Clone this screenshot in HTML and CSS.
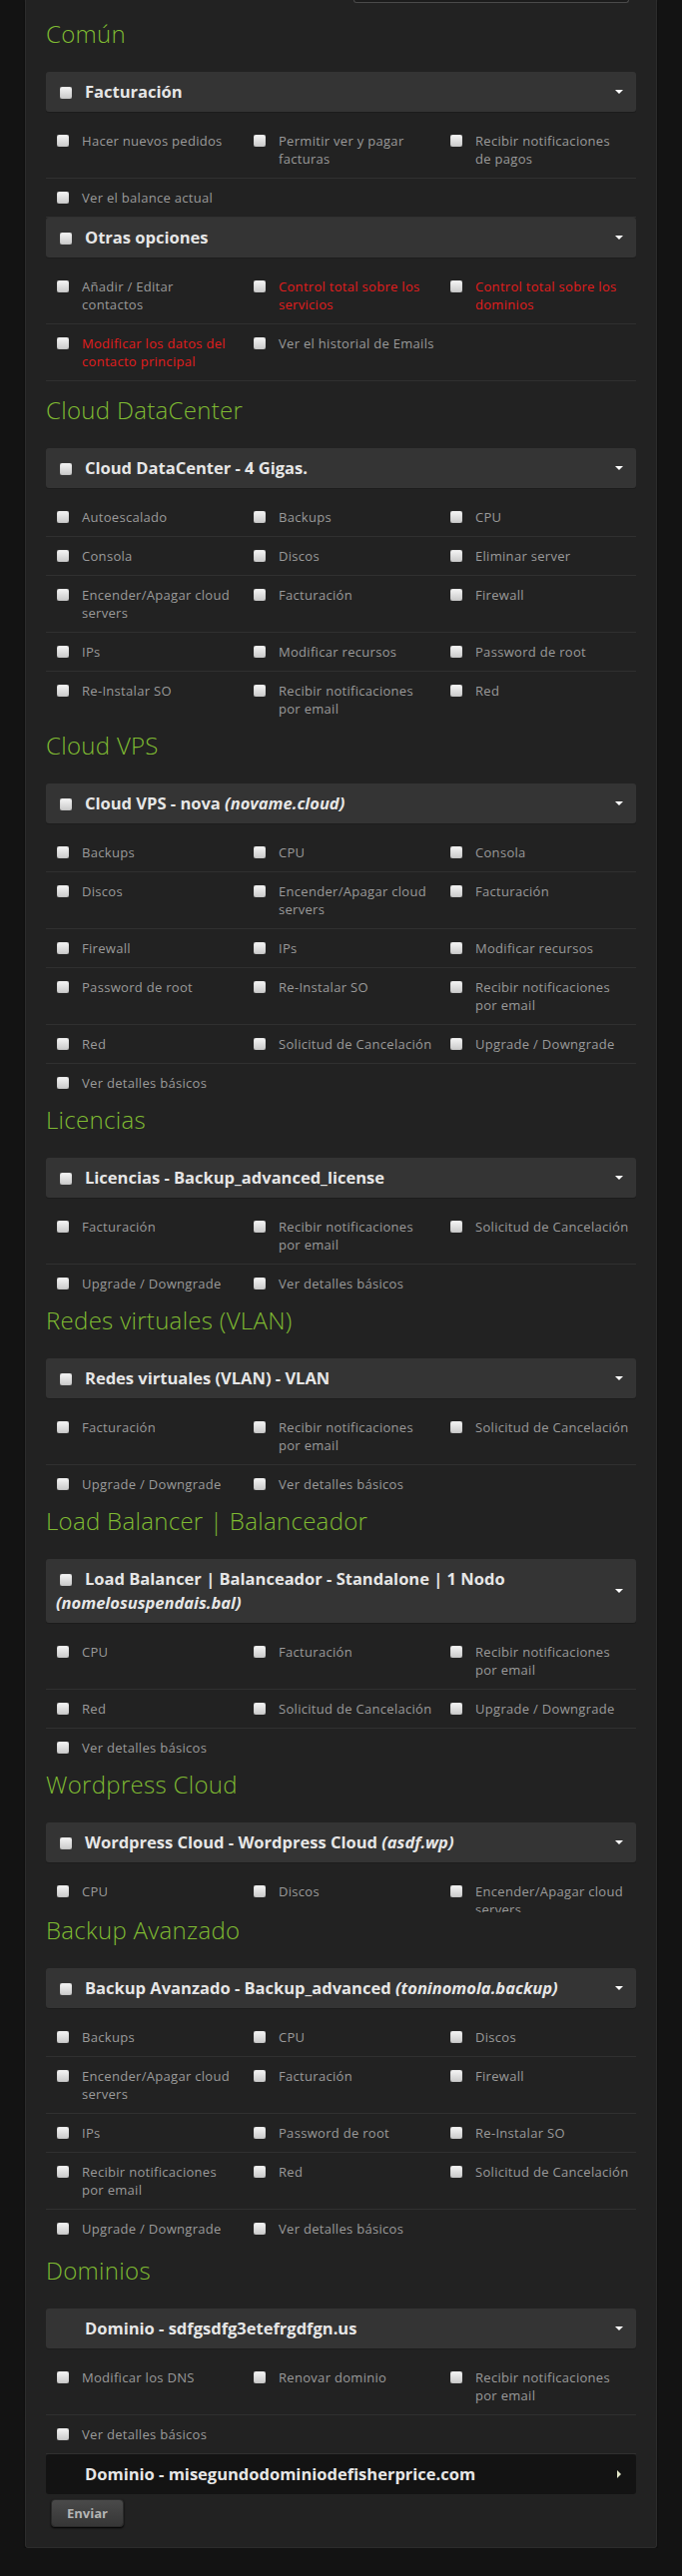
FILE: index.html
```html
<!DOCTYPE html>
<html lang="es">
<head>
    <meta charset="UTF-8">
    <meta name="viewport" content="width=device-width, initial-scale=1.0">
    <title>Permisos del contacto</title>
    <link rel="stylesheet" href="styles.css">
</head>
<body>
    <form class="panel">
        <div class="topbar"><div class="top-select"></div></div>

        <!-- Común -->
        <div class="section section-common">
            <h2 class="section-title">Común</h2>
            <div class="group">
                <div class="group-head"><span class="head-text"><input type="checkbox">Facturación</span><span class="caret"></span></div>
                <div class="options">
                    <div class="row">
                        <label class="opt"><input type="checkbox"><span>Hacer nuevos pedidos</span></label>
                        <label class="opt"><input type="checkbox"><span>Permitir ver y pagar<br>facturas</span></label>
                        <label class="opt"><input type="checkbox"><span>Recibir notificaciones<br>de pagos</span></label>
                    </div>
                    <div class="row">
                        <label class="opt"><input type="checkbox"><span>Ver el balance actual</span></label>
                    </div>
                </div>
            </div>
            <div class="group">
                <div class="group-head"><span class="head-text"><input type="checkbox">Otras opciones</span><span class="caret"></span></div>
                <div class="options">
                    <div class="row">
                        <label class="opt"><input type="checkbox"><span>Añadir / Editar<br>contactos</span></label>
                        <label class="opt danger"><input type="checkbox"><span>Control total sobre los<br>servicios</span></label>
                        <label class="opt danger"><input type="checkbox"><span>Control total sobre los<br>dominios</span></label>
                    </div>
                    <div class="row">
                        <label class="opt danger"><input type="checkbox"><span>Modificar los datos del<br>contacto principal</span></label>
                        <label class="opt"><input type="checkbox"><span>Ver el historial de Emails</span></label>
                    </div>
                </div>
            </div>
        </div>

        <!-- Cloud DataCenter -->
        <div class="section">
            <h2 class="section-title">Cloud DataCenter</h2>
            <div class="group">
                <div class="group-head"><span class="head-text"><input type="checkbox">Cloud DataCenter - 4 Gigas.</span><span class="caret"></span></div>
                <div class="options">
                    <div class="row">
                        <label class="opt"><input type="checkbox"><span>Autoescalado</span></label>
                        <label class="opt"><input type="checkbox"><span>Backups</span></label>
                        <label class="opt"><input type="checkbox"><span>CPU</span></label>
                    </div>
                    <div class="row">
                        <label class="opt"><input type="checkbox"><span>Consola</span></label>
                        <label class="opt"><input type="checkbox"><span>Discos</span></label>
                        <label class="opt"><input type="checkbox"><span>Eliminar server</span></label>
                    </div>
                    <div class="row">
                        <label class="opt"><input type="checkbox"><span>Encender/Apagar cloud<br>servers</span></label>
                        <label class="opt"><input type="checkbox"><span>Facturación</span></label>
                        <label class="opt"><input type="checkbox"><span>Firewall</span></label>
                    </div>
                    <div class="row">
                        <label class="opt"><input type="checkbox"><span>IPs</span></label>
                        <label class="opt"><input type="checkbox"><span>Modificar recursos</span></label>
                        <label class="opt"><input type="checkbox"><span>Password de root</span></label>
                    </div>
                    <div class="row">
                        <label class="opt"><input type="checkbox"><span>Re-Instalar SO</span></label>
                        <label class="opt"><input type="checkbox"><span>Recibir notificaciones<br>por email</span></label>
                        <label class="opt"><input type="checkbox"><span>Red</span></label>
                    </div>
                </div>
            </div>
        </div>

        <!-- Cloud VPS -->
        <div class="section">
            <h2 class="section-title">Cloud VPS</h2>
            <div class="group">
                <div class="group-head"><span class="head-text"><input type="checkbox">Cloud VPS - nova <em>(novame.cloud)</em></span><span class="caret"></span></div>
                <div class="options">
                    <div class="row">
                        <label class="opt"><input type="checkbox"><span>Backups</span></label>
                        <label class="opt"><input type="checkbox"><span>CPU</span></label>
                        <label class="opt"><input type="checkbox"><span>Consola</span></label>
                    </div>
                    <div class="row">
                        <label class="opt"><input type="checkbox"><span>Discos</span></label>
                        <label class="opt"><input type="checkbox"><span>Encender/Apagar cloud<br>servers</span></label>
                        <label class="opt"><input type="checkbox"><span>Facturación</span></label>
                    </div>
                    <div class="row">
                        <label class="opt"><input type="checkbox"><span>Firewall</span></label>
                        <label class="opt"><input type="checkbox"><span>IPs</span></label>
                        <label class="opt"><input type="checkbox"><span>Modificar recursos</span></label>
                    </div>
                    <div class="row">
                        <label class="opt"><input type="checkbox"><span>Password de root</span></label>
                        <label class="opt"><input type="checkbox"><span>Re-Instalar SO</span></label>
                        <label class="opt"><input type="checkbox"><span>Recibir notificaciones<br>por email</span></label>
                    </div>
                    <div class="row">
                        <label class="opt"><input type="checkbox"><span>Red</span></label>
                        <label class="opt"><input type="checkbox"><span>Solicitud de Cancelación</span></label>
                        <label class="opt"><input type="checkbox"><span>Upgrade / Downgrade</span></label>
                    </div>
                    <div class="row">
                        <label class="opt"><input type="checkbox"><span>Ver detalles básicos</span></label>
                    </div>
                </div>
            </div>
        </div>

        <!-- Licencias -->
        <div class="section">
            <h2 class="section-title">Licencias</h2>
            <div class="group">
                <div class="group-head"><span class="head-text"><input type="checkbox">Licencias - Backup_advanced_license</span><span class="caret"></span></div>
                <div class="options">
                    <div class="row">
                        <label class="opt"><input type="checkbox"><span>Facturación</span></label>
                        <label class="opt"><input type="checkbox"><span>Recibir notificaciones<br>por email</span></label>
                        <label class="opt"><input type="checkbox"><span>Solicitud de Cancelación</span></label>
                    </div>
                    <div class="row">
                        <label class="opt"><input type="checkbox"><span>Upgrade / Downgrade</span></label>
                        <label class="opt"><input type="checkbox"><span>Ver detalles básicos</span></label>
                    </div>
                </div>
            </div>
        </div>

        <!-- Redes virtuales -->
        <div class="section">
            <h2 class="section-title">Redes virtuales (VLAN)</h2>
            <div class="group">
                <div class="group-head"><span class="head-text"><input type="checkbox">Redes virtuales (VLAN) - VLAN</span><span class="caret"></span></div>
                <div class="options">
                    <div class="row">
                        <label class="opt"><input type="checkbox"><span>Facturación</span></label>
                        <label class="opt"><input type="checkbox"><span>Recibir notificaciones<br>por email</span></label>
                        <label class="opt"><input type="checkbox"><span>Solicitud de Cancelación</span></label>
                    </div>
                    <div class="row">
                        <label class="opt"><input type="checkbox"><span>Upgrade / Downgrade</span></label>
                        <label class="opt"><input type="checkbox"><span>Ver detalles básicos</span></label>
                    </div>
                </div>
            </div>
        </div>

        <!-- Load Balancer -->
        <div class="section">
            <h2 class="section-title">Load Balancer | Balanceador</h2>
            <div class="group">
                <div class="group-head"><span class="head-text"><input type="checkbox">Load Balancer | Balanceador - Standalone | 1 Nodo <em>(nomelosuspendais.bal)</em></span><span class="caret"></span></div>
                <div class="options">
                    <div class="row">
                        <label class="opt"><input type="checkbox"><span>CPU</span></label>
                        <label class="opt"><input type="checkbox"><span>Facturación</span></label>
                        <label class="opt"><input type="checkbox"><span>Recibir notificaciones<br>por email</span></label>
                    </div>
                    <div class="row">
                        <label class="opt"><input type="checkbox"><span>Red</span></label>
                        <label class="opt"><input type="checkbox"><span>Solicitud de Cancelación</span></label>
                        <label class="opt"><input type="checkbox"><span>Upgrade / Downgrade</span></label>
                    </div>
                    <div class="row">
                        <label class="opt"><input type="checkbox"><span>Ver detalles básicos</span></label>
                    </div>
                </div>
            </div>
        </div>

        <!-- Wordpress Cloud (opening) -->
        <div class="section">
            <h2 class="section-title">Wordpress Cloud</h2>
            <div class="group">
                <div class="group-head"><span class="head-text"><input type="checkbox">Wordpress Cloud - Wordpress Cloud <em>(asdf.wp)</em></span><span class="caret"></span></div>
                <div class="options opening">
                    <div class="row">
                        <label class="opt"><input type="checkbox"><span>CPU</span></label>
                        <label class="opt"><input type="checkbox"><span>Discos</span></label>
                        <label class="opt"><input type="checkbox"><span>Encender/Apagar cloud<br>servers</span></label>
                    </div>
                </div>
            </div>
        </div>

        <!-- Backup Avanzado -->
        <div class="section">
            <h2 class="section-title">Backup Avanzado</h2>
            <div class="group">
                <div class="group-head"><span class="head-text"><input type="checkbox">Backup Avanzado - Backup_advanced <em>(toninomola.backup)</em></span><span class="caret"></span></div>
                <div class="options">
                    <div class="row">
                        <label class="opt"><input type="checkbox"><span>Backups</span></label>
                        <label class="opt"><input type="checkbox"><span>CPU</span></label>
                        <label class="opt"><input type="checkbox"><span>Discos</span></label>
                    </div>
                    <div class="row">
                        <label class="opt"><input type="checkbox"><span>Encender/Apagar cloud<br>servers</span></label>
                        <label class="opt"><input type="checkbox"><span>Facturación</span></label>
                        <label class="opt"><input type="checkbox"><span>Firewall</span></label>
                    </div>
                    <div class="row">
                        <label class="opt"><input type="checkbox"><span>IPs</span></label>
                        <label class="opt"><input type="checkbox"><span>Password de root</span></label>
                        <label class="opt"><input type="checkbox"><span>Re-Instalar SO</span></label>
                    </div>
                    <div class="row">
                        <label class="opt"><input type="checkbox"><span>Recibir notificaciones<br>por email</span></label>
                        <label class="opt"><input type="checkbox"><span>Red</span></label>
                        <label class="opt"><input type="checkbox"><span>Solicitud de Cancelación</span></label>
                    </div>
                    <div class="row">
                        <label class="opt"><input type="checkbox"><span>Upgrade / Downgrade</span></label>
                        <label class="opt"><input type="checkbox"><span>Ver detalles básicos</span></label>
                    </div>
                </div>
            </div>
        </div>

        <!-- Dominios -->
        <div class="section section-domains">
            <h2 class="section-title">Dominios</h2>
            <div class="group">
                <div class="group-head"><span class="head-text"><input type="checkbox" class="hidden-check">Dominio - sdfgsdfg3etefrgdfgn.us</span><span class="caret"></span></div>
                <div class="options">
                    <div class="row">
                        <label class="opt"><input type="checkbox"><span>Modificar los DNS</span></label>
                        <label class="opt"><input type="checkbox"><span>Renovar dominio</span></label>
                        <label class="opt"><input type="checkbox"><span>Recibir notificaciones<br>por email</span></label>
                    </div>
                    <div class="row">
                        <label class="opt"><input type="checkbox"><span>Ver detalles básicos</span></label>
                    </div>
                </div>
            </div>
            <div class="group">
                <div class="group-head collapsed"><span class="head-text"><input type="checkbox" class="hidden-check">Dominio - misegundodominiodefisherprice.com</span><span class="caret"></span></div>
            </div>
        </div>

        <button type="button" class="btn">Enviar</button>
    </form>
</body>
</html>
```

FILE: styles.css
```css
body {
    margin: 0;
    background-color: #131313;
    font-family: "Open Sans", "DejaVu Sans", sans-serif;
    color: #9a9a9a;
}
.panel {
    display: block;
    margin: 0 25px;
    padding: 0 20px 20px;
    background-color: #222;
    border: 1px solid #2c2c2c;
    border-top: none;
    border-radius: 0 0 3px 3px;
    box-shadow: 0 2px 2px #050505;
}
.topbar {
    display: flex;
    justify-content: flex-end;
    padding-right: 7px;
}
.top-select {
    width: 274px;
    height: 2px;
    background-color: #1c1c1c;
    border: 1px solid #4a4a4a;
    border-top: none;
    border-radius: 0 0 3px 3px;
}
.section-title {
    margin: 5px 0 25px;
    font-size: 24px;
    font-weight: 300;
    line-height: 26px;
    letter-spacing: 0.3px;
    color: #7fbb32;
}
.section-common {
    padding-bottom: 11px;
}
.section-common .section-title {
    margin-top: 18px;
}
.section-domains .section-title {
    margin-top: 10px;
}
.group-head {
    display: flex;
    align-items: center;
    padding: 8px 13px 8px 10px;
    background-color: #343434;
    border-radius: 3px;
    box-shadow: 0 1px 0 #1c1c1c;
    font-size: 16.5px;
    font-weight: 700;
    line-height: 24px;
    color: #e6e6e6;
}
.group-head.collapsed {
    background-color: #131313;
    box-shadow: none;
}
.head-text {
    flex: 1;
    padding-right: 6px;
}
.head-text em {
    font-style: italic;
}
.caret {
    width: 0;
    height: 0;
    border-left: 4px solid transparent;
    border-right: 4px solid transparent;
    border-top: 4px solid #fff;
}
.collapsed .caret {
    margin-right: 2px;
    border-top: 4px solid transparent;
    border-bottom: 4px solid transparent;
    border-left: 4px solid #e2e6c8;
    border-right: none;
}
input[type="checkbox"] {
    appearance: none;
    -webkit-appearance: none;
    width: 12px;
    height: 12px;
    margin: 0;
    background: linear-gradient(#f6f6f6, #c9c9c9);
    border-radius: 2px;
    box-shadow: inset 0 0 1px #888;
}
.group-head input[type="checkbox"] {
    margin: 0 13px 0 4px;
    vertical-align: middle;
    position: relative;
    top: -1px;
}
.group-head .hidden-check {
    visibility: hidden;
}
.options {
    margin-top: 10px;
}
.options.opening {
    height: 40px;
    overflow: hidden;
}
.row {
    display: grid;
    grid-template-columns: repeat(3, 1fr);
    padding: 10px 0;
    border-bottom: 1px solid #303030;
}
.section > .group:last-child > .options > .row:last-child {
    border-bottom: none;
}
.section-common > .group:last-child > .options > .row:last-child {
    border-bottom: 1px solid #303030;
}
.opt {
    display: flex;
    align-items: flex-start;
    padding-left: 11px;
    font-size: 13px;
    line-height: 18px;
    letter-spacing: 0.3px;
}
.opt input[type="checkbox"] {
    flex: none;
    margin: 3px 13px 0 0;
}
.opt.danger {
    color: #e21d1d;
}
.btn {
    display: block;
    height: 28px;
    margin: 5px 0 0 5px;
    padding: 0 15px;
    background: linear-gradient(#4a4a4a, #363636);
    border: 1px solid #2a2a2a;
    border-radius: 4px;
    box-shadow: 0 1px 2px #000;
    font-family: "Open Sans", "DejaVu Sans", sans-serif;
    font-size: 13px;
    font-weight: 700;
    color: #b4b4b4;
}
```
